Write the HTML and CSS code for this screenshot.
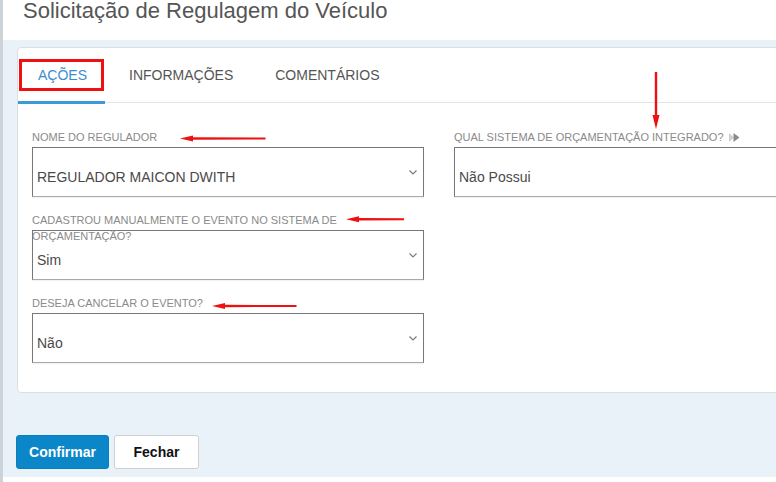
FILE: index.html
```html
<!DOCTYPE html>
<html lang="pt-BR">
<head>
    <meta charset="UTF-8">
    <meta name="viewport" content="width=device-width, initial-scale=1.0">
    <title>Solicitação de Regulagem do Veículo</title>
    <link rel="stylesheet" href="styles.css">
</head>
<body>
    <div class="page">
        <div class="modal">
            <div class="modal-header">
                <h1>Solicitação de Regulagem do Veículo</h1>
            </div>

            <div class="modal-body">
                <div class="card">
                    <div class="tabs">
                        <div class="tab active">Ações<span class="mark"></span></div>
                        <div class="tab">Informações</div>
                        <div class="tab">Comentários</div>
                    </div>

                    <div class="form">
                        <div class="col">
                            <div class="field">
                                <div class="label">Nome do regulador</div>
                                <div class="select">
                                    <span class="value">REGULADOR MAICON DWITH</span>
                                    <svg class="chevron" width="8" height="5" viewBox="0 0 8 5"><path d="M0.5 0.5 L4 4 L7.5 0.5" fill="none" stroke="#7a7a7a" stroke-width="1.2"/></svg>
                                </div>
                            </div>
                            <div class="field">
                                <div class="label">Cadastrou manualmente o evento no sistema de orçamentação?</div>
                                <div class="select">
                                    <span class="value">Sim</span>
                                    <svg class="chevron" width="8" height="5" viewBox="0 0 8 5"><path d="M0.5 0.5 L4 4 L7.5 0.5" fill="none" stroke="#7a7a7a" stroke-width="1.2"/></svg>
                                </div>
                            </div>
                            <div class="field">
                                <div class="label">Deseja cancelar o evento?</div>
                                <div class="select">
                                    <span class="value">Não</span>
                                    <svg class="chevron" width="8" height="5" viewBox="0 0 8 5"><path d="M0.5 0.5 L4 4 L7.5 0.5" fill="none" stroke="#7a7a7a" stroke-width="1.2"/></svg>
                                </div>
                            </div>
                        </div>

                        <div class="col">
                            <div class="field">
                                <div class="label">Qual sistema de orçamentação integrado?
                                    <svg class="info" width="11" height="9" viewBox="0 0 11 9"><path d="M0 0 L5 4.5 L0 9 Z" fill="#cfcfcf"/><path d="M4.5 0 L10.5 4.5 L4.5 9 Z" fill="#8a8a8a"/></svg>
                                </div>
                                <div class="select readonly">
                                    <span class="value">Não Possui</span>
                                </div>
                            </div>
                        </div>
                    </div>
                </div>

                <div class="actions">
                    <button class="btn btn-primary">Confirmar</button>
                    <button class="btn btn-default">Fechar</button>
                </div>
            </div>
        </div>

        <!-- setas de destaque -->
        <svg class="arrows" width="776" height="482" viewBox="0 0 776 482">
            <g fill="#ee1111">
                <polygon points="180,138.5 193,135.5 193,137.3 265.5,137.5 265.5,139.5 193,139.7 193,141.5"/>
                <polygon points="346,219.3 359,216.3 359,218.1 404,218.3 404,220.3 359,220.5 359,222.3"/>
                <polygon points="212,306 225,303 225,304.8 296.5,305 296.5,307 225,307.2 225,309"/>
                <polygon points="656,129 652.5,115 654.8,115 654.8,72 657.2,72 657.2,115 659.5,115"/>
            </g>
        </svg>
    </div>
</body>
</html>
```

FILE: styles.css
```css
body { margin: 0; overflow: hidden; font-family: "Liberation Sans", Arial, sans-serif; background-color: #fff; }
.page { position: relative; width: 776px; height: 482px; border-left: 3px solid #ccd4da; box-sizing: border-box; overflow: hidden; }

.modal-header { height: 40px; padding-left: 20px; background-color: #fff; }
.modal-header h1 { margin: 0; font-size: 22px; line-height: 22px; font-weight: normal; color: #555; }

.modal-body { height: 437px; background-color: #eaf2f9; padding: 7px 0 0 13px; box-sizing: border-box; }

.card { width: 900px; height: 346px; margin-left: 1px; background-color: #fff; border: 1px solid #dcdfe2; border-radius: 4px 0 0 4px; box-sizing: border-box; }

.tabs { display: flex; height: 55px; border-bottom: 1px solid #e2e4e6; box-sizing: border-box; }
.tab { position: relative; display: flex; align-items: center; padding: 0 20px 1px; margin-right: 2px; font-size: 14px; text-transform: uppercase; color: #555; }
.tab.active { color: #3a8ed0; }
.tab.active::after { content: ""; position: absolute; left: 0; right: 2px; bottom: -2px; height: 3px; background-color: #3d9ad8; }
.tab .mark { position: absolute; left: 1px; top: 11px; width: 85px; height: 32px; border: 3px solid #ee1111; box-sizing: border-box; }

.form { display: flex; gap: 30px; padding: 26px 0 0 14px; }
.col { width: 392px; flex: none; }
.field { margin-bottom: 15px; }
.label { height: 16px; margin-bottom: 2px; font-size: 11px; line-height: 16px; text-transform: uppercase; color: #8a8a8a; }
.label .info { vertical-align: -1px; margin-left: 2px; }

.select { display: flex; justify-content: space-between; height: 50px; padding: 0 6px 0 4px; border: 1px solid #777; border-bottom-color: #a9a9a9; box-shadow: 0 1px 1px rgba(0,0,0,0.05); background-color: #fff; box-sizing: border-box; }
.select .value { padding-top: 19px; font-size: 14px; line-height: 20px; color: #4a4a4a; }
.select .chevron { margin-top: 22px; flex: none; }

.actions { display: flex; gap: 5px; margin-top: 42px; }
.btn { height: 34px; padding: 0; border-radius: 3px; font-family: "Liberation Sans", Arial, sans-serif; font-size: 14px; font-weight: bold; cursor: pointer; }
.btn-primary { width: 93px; background-color: #0b87c9; color: #fff; border: 1px solid #0a7fbe; }
.btn-default { width: 85px; background-color: #fff; color: #111; border: 1px solid #d0d0d0; }

.arrows { position: absolute; left: -3px; top: 0; pointer-events: none; }
```
